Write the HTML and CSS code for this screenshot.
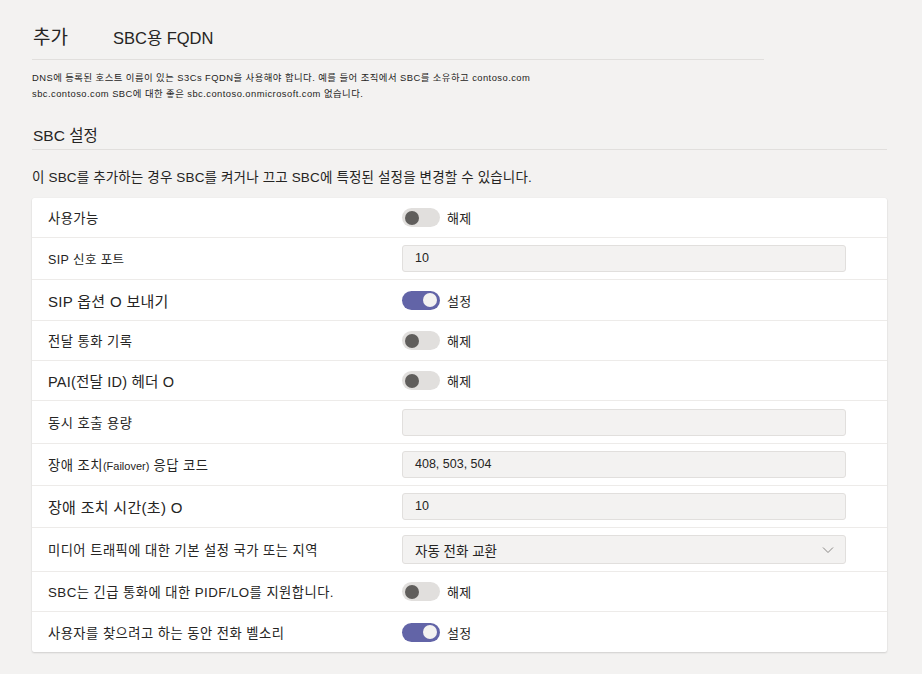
FILE: index.html
```html
<!DOCTYPE html>
<html lang="ko">
<head>
<meta charset="utf-8">
<link rel="stylesheet" href="styles.css">
</head>
<body>
<div class="page">
  <div class="header">
    <span class="title">추가</span>
    <span class="subtitle">SBC용 FQDN</span>
  </div>
  <p class="desc">DNS에 등록된 호스트 이름이 있는 S3Cs FQDN을 사용해야 합니다. 예를 들어 조직에서 SBC를 소유하고 contoso.com<br>sbc.contoso.com SBC에 대한 좋은 sbc.contoso.onmicrosoft.com 없습니다.</p>
  <h2 class="section">SBC 설정</h2>
  <p class="intro">이 SBC를 추가하는 경우 SBC를 켜거나 끄고 SBC에 특정된 설정을 변경할 수 있습니다.</p>
  <div class="card">
    <div class="row row-toggle first">
      <span class="label">사용가능</span>
      <div class="control"><span class="toggle"><span class="knob"></span></span><span class="state">해제</span></div>
    </div>
    <div class="row row-input">
      <span class="label sm">SIP 신호 포트</span>
      <div class="control"><div class="input">10</div></div>
    </div>
    <div class="row row-toggle plus">
      <span class="label lg">SIP 옵션 O 보내기</span>
      <div class="control"><span class="toggle on"><span class="knob"></span></span><span class="state">설정</span></div>
    </div>
    <div class="row row-toggle">
      <span class="label">전달 통화 기록</span>
      <div class="control"><span class="toggle"><span class="knob"></span></span><span class="state">해제</span></div>
    </div>
    <div class="row row-toggle">
      <span class="label md">PAI(전달 ID) 헤더 O</span>
      <div class="control"><span class="toggle"><span class="knob"></span></span><span class="state">해제</span></div>
    </div>
    <div class="row row-input tall">
      <span class="label">동시 호출 용량</span>
      <div class="control"><div class="input"></div></div>
    </div>
    <div class="row row-input">
      <span class="label">장애 조치<span class="small">(Failover)</span> 응답 코드</span>
      <div class="control"><div class="input">408, 503, 504</div></div>
    </div>
    <div class="row row-input">
      <span class="label lg">장애 조치 시간(초) O</span>
      <div class="control"><div class="input">10</div></div>
    </div>
    <div class="row row-select">
      <span class="label">미디어 트래픽에 대한 기본 설정 국가 또는 지역</span>
      <div class="control">
        <div class="select"><span>자동 전화 교환</span>
          <svg class="chev" width="12" height="8" viewBox="0 0 12 8"><path d="M1 1.5 L6 6.5 L11 1.5" fill="none" stroke="#8a8886" stroke-width="1"/></svg>
        </div>
      </div>
    </div>
    <div class="row row-toggle">
      <span class="label">SBC는 긴급 통화에 대한 PIDF/LO를 지원합니다.</span>
      <div class="control"><span class="toggle"><span class="knob"></span></span><span class="state">해제</span></div>
    </div>
    <div class="row row-toggle plus">
      <span class="label">사용자를 찾으려고 하는 동안 전화 벨소리</span>
      <div class="control"><span class="toggle on"><span class="knob"></span></span><span class="state">설정</span></div>
    </div>
  </div>
</div>
</body>
</html>
```
FILE: styles.css
```css
* { box-sizing: border-box; }
html, body { margin: 0; padding: 0; }
body {
  background: #f3f2f1;
  color: #252423;
  font-family: "Liberation Sans", "Noto Sans CJK KR", sans-serif;
  width: 922px;
  height: 674px;
  overflow: hidden;
}
.page {
  padding: 25px 0 0 32px;
  width: 887px;
}
.header {
  width: 732px;
  height: 35px;
  border-bottom: 1px solid #e1dfdd;
  display: flex;
  align-items: flex-start;
  line-height: 26px;
}
.title {
  font-size: 19px;
  width: 81px;
  padding-left: 1px;
}
.subtitle {
  font-size: 16.5px;
}
.desc {
  margin: 10px 0 0;
  font-size: 9.4px;
  letter-spacing: 0.45px;
  line-height: 16px;
  color: #252423;
}
.section {
  margin: 23px 0 0;
  font-weight: normal;
  font-size: 15.5px;
  line-height: 22px;
  padding: 0 0 2px 1px;
  border-bottom: 1px solid #e1dfdd;
}
.intro {
  margin: 18px 0 0;
  font-size: 13.5px;
  letter-spacing: 0.15px;
  line-height: 20px;
}
.card {
  margin-top: 10px;
  background: #ffffff;
  border-radius: 2px;
  box-shadow: 0 1px 2px rgba(0,0,0,0.14), 0 0 1px rgba(0,0,0,0.08);
}
.row {
  display: grid;
  grid-template-columns: 354px 1fr;
  align-items: center;
  padding: 0 41px 0 16px;
  border-top: 1px solid #edebe9;
}
.row.first { border-top: none; height: 39px; }
.row-toggle { height: 40px; }
.row-toggle.plus { height: 41px; }
.row-input { height: 42px; }
.row-input.tall { height: 43px; }
.row-select { height: 44px; }
.label {
  font-size: 13.3px;
  letter-spacing: 0.45px;
  color: #252423;
  white-space: nowrap;
}
.label.sm { font-size: 12.5px; letter-spacing: 0.4px; }
.label.md { font-size: 14.5px; letter-spacing: 0.2px; }
.label.lg { font-size: 15px; letter-spacing: 0.3px; }
.small { font-size: 11px; letter-spacing: 0; }
.control {
  display: flex;
  align-items: center;
}
.toggle {
  width: 38px;
  height: 19px;
  border-radius: 10px;
  background: #e1dfdd;
  position: relative;
  flex: none;
}
.knob {
  position: absolute;
  top: 2.5px;
  left: 3px;
  width: 14px;
  height: 14px;
  border-radius: 50%;
  background: #605e5c;
}
.toggle.on { background: #6264a7; }
.toggle.on .knob {
  left: auto;
  right: 3px;
  background: #f3f2f1;
}
.state {
  margin-left: 7px;
  font-size: 13px;
  letter-spacing: 0.3px;
}
.input {
  width: 100%;
  height: 27px;
  background: #f3f2f1;
  border: 1px solid #e1dfdd;
  border-radius: 3px;
  padding: 0 12px;
  font-size: 12.5px;
  line-height: 25px;
  color: #252423;
}
.select {
  width: 100%;
  height: 29px;
  background: #f3f2f1;
  border: 1px solid #e1dfdd;
  border-radius: 3px;
  padding: 0 11px 0 12px;
  font-size: 13.5px;
  display: flex;
  align-items: center;
  justify-content: space-between;
}
.chev { flex: none; }
```
